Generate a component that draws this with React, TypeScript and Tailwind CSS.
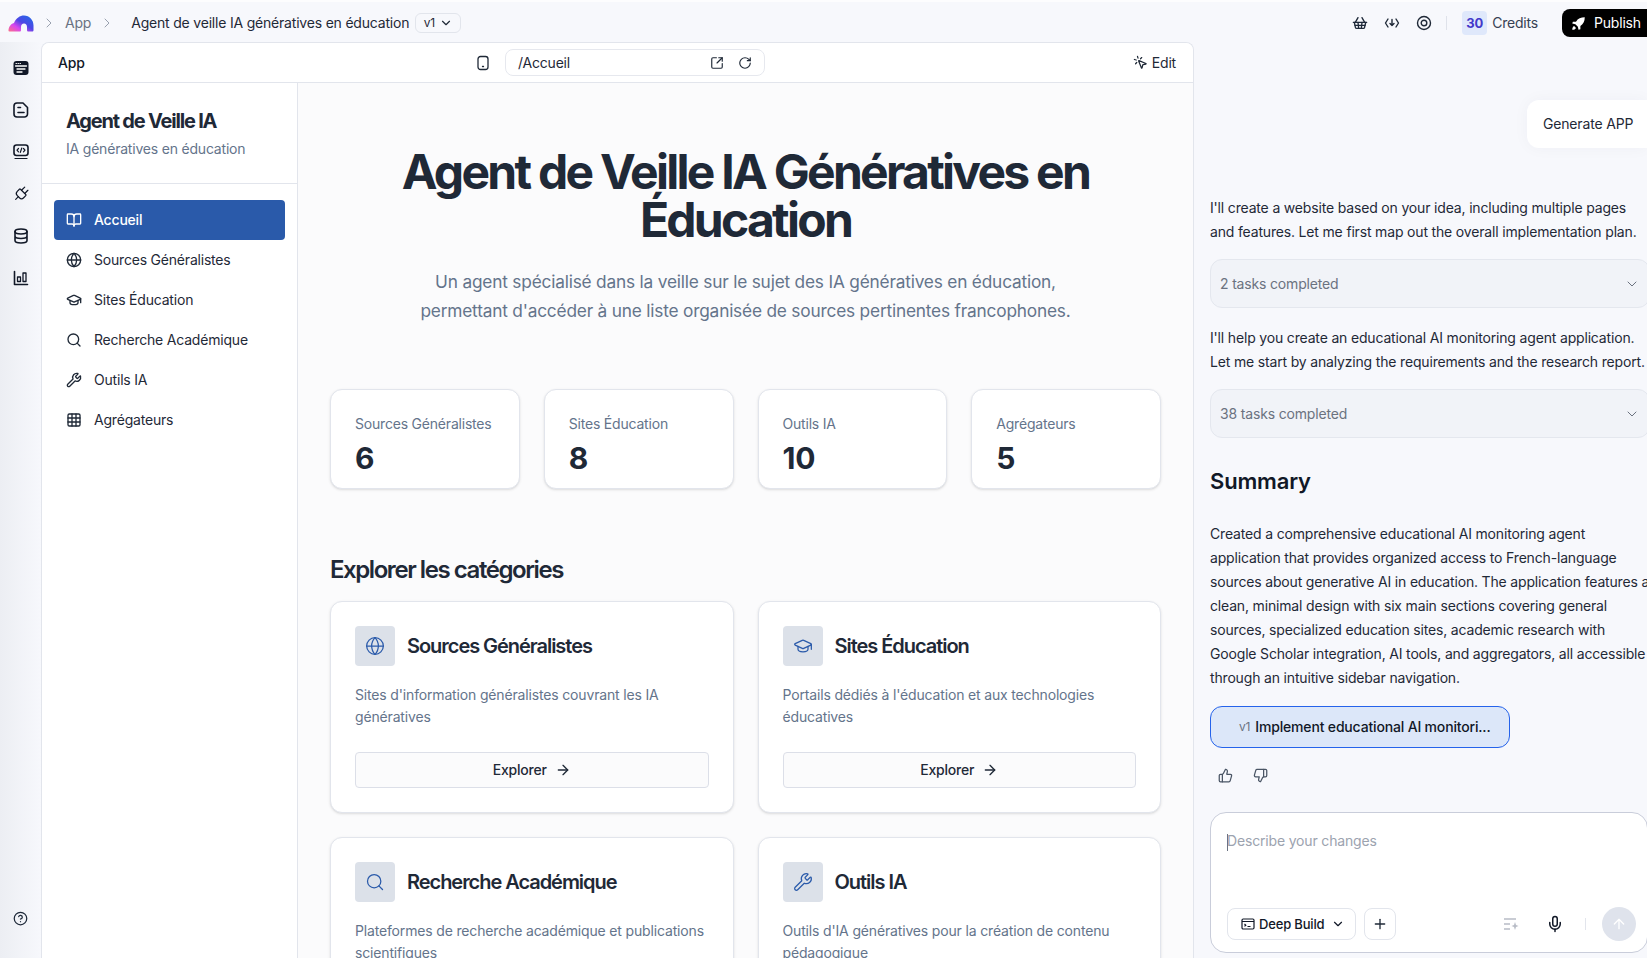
import {
  ArrowRight,
  ArrowUp,
  BookOpen,
  ChevronDown,
  ChevronRight,
  CircleHelp,
  Globe,
  GraduationCap,
  Grid3x3,
  Mic,
  MousePointerClick,
  Plug,
  Plus,
  RotateCw,
  Search,
  ShoppingBasket,
  SquareArrowOutUpRight,
  ThumbsDown,
  ThumbsUp,
  Wrench,
} from 'lucide-react'

const navItems = [
  { label: 'Sources Généralistes', icon: Globe },
  { label: 'Sites Éducation', icon: GraduationCap },
  { label: 'Recherche Académique', icon: Search },
  { label: 'Outils IA', icon: Wrench },
  { label: 'Agrégateurs', icon: Grid3x3 },
]

const stats = [
  { label: 'Sources Généralistes', value: '6' },
  { label: 'Sites Éducation', value: '8' },
  { label: 'Outils IA', value: '10' },
  { label: 'Agrégateurs', value: '5' },
]

const categories = [
  { title: 'Sources Généralistes', text: "Sites d'information généralistes couvrant les IA génératives", icon: Globe },
  { title: 'Sites Éducation', text: "Portails dédiés à l'éducation et aux technologies éducatives", icon: GraduationCap },
  { title: 'Recherche Académique', text: 'Plateformes de recherche académique et publications scientifiques', icon: Search },
  { title: 'Outils IA', text: "Outils d'IA génératives pour la création de contenu pédagogique", icon: Wrench },
]

function Logo() {
  return (
    <svg width="26" height="17" viewBox="0 0 26 17">
      <defs>
        <linearGradient id="lg" x1="0" y1="1" x2="1" y2="0">
          <stop offset="0" stopColor="#fb7185" />
          <stop offset="0.3" stopColor="#d946ef" />
          <stop offset="0.55" stopColor="#4f46e5" />
          <stop offset="1" stopColor="#1d6fe8" />
        </linearGradient>
      </defs>
      <path d="M0.500 16c0-4 2-7 5.500-8C8 3 12 0.500 16 0.500c5.500 0 9.500 4.500 9.500 10V15c0 1-.5 1.500-1.500 1.500h-3.500c-1 0-1.500-.5-1.500-1.500v-3c0-2-1.200-3.500-3-3.500S13 10 13 12v3c0 1-.5 1.500-1.500 1.500H1.500c-.6 0-1-.2-1-.5z" fill="url(#lg)" />
    </svg>
  )
}

function RailIcon({ children }: { children: React.ReactNode }) {
  return (
    <svg width="18" height="18" viewBox="0 0 18 18" fill="none" stroke="#111827" strokeWidth="1.600" strokeLinecap="round" strokeLinejoin="round">
      {children}
    </svg>
  )
}

function Rail() {
  return (
    <aside className="flex w-[41px] shrink-0 flex-col items-center bg-gradient-to-r from-[#eceef3] to-[#f7f8fc] pb-[32px]">
      <div className="flex flex-col items-center gap-[24px] pt-[17px]">
        <RailIcon>
          <rect x="1.500" y="2" width="15" height="14" rx="3" fill="#111827" stroke="none" />
          <path d="M3.500 7h11M5 10h8M5 13h5" stroke="#fff" strokeWidth="1.300" />
          <path d="M4 4.500h.5M6 4.500h.5M8 4.500h.5" stroke="#fff" strokeWidth="1" />
        </RailIcon>
        <RailIcon>
          <path d="M5 2h6l4.500 4.500V13a3 3 0 0 1-3 3h-7.500a3 3 0 0 1-3-3V5a3 3 0 0 1 3-3z" />
          <path d="M6 6.500h2.500M6 11.500h6" />
        </RailIcon>
        <RailIcon>
          <rect x="2" y="2" width="14" height="10.500" rx="2.500" />
          <path d="M6.500 5.500l-1.500 1.700 1.500 1.700M11.500 5.500L13 7.200l-1.500 1.700M9.800 5l-1.500 4.400M3 15.500h12" strokeWidth="1.200" />
        </RailIcon>
        <Plug className="h-[18px] w-[18px] rotate-45 text-[#111827]" strokeWidth={1.6} />
        <RailIcon>
          <ellipse cx="9" cy="4.500" rx="6" ry="2.500" />
          <path d="M3 4.500v9c0 1.400 2.700 2.500 6 2.500s6-1.100 6-2.500v-9M3 9c0 1.400 2.700 2.500 6 2.500s6-1.100 6-2.500" />
        </RailIcon>
        <RailIcon>
          <path d="M2.500 2.500v13h13" />
          <rect x="5.500" y="8" width="3" height="4.500" strokeWidth="1.300" />
          <rect x="11" y="4" width="3" height="8.500" strokeWidth="1.300" />
        </RailIcon>
      </div>
      <CircleHelp className="mt-auto h-[15px] w-[15px] text-gray-800" />
    </aside>
  )
}

function TopBar() {
  return (
    <header className="flex h-[42px] shrink-0 items-center border-t-2 border-white/70 pt-[2px] text-sm">
      <div className="ml-2 flex items-center">
        <Logo />
        <ChevronRight className="ml-[7px] h-4 w-4 text-gray-400" strokeWidth={1.5} />
        <span className="ml-2 text-gray-500">App</span>
        <ChevronRight className="ml-2 h-4 w-4 text-gray-400" strokeWidth={1.5} />
        <span className="ml-4 text-[#1f2937]">Agent de veille IA génératives en éducation</span>
        <span className="ml-[6px] flex h-[20px] w-[46px] items-center justify-center gap-1 rounded-md border border-[#e2e5ec] text-xs text-[#1f2937]">
          v1 <ChevronDown className="h-[14px] w-[14px]" />
        </span>
      </div>
      <div className="ml-auto flex items-center">
        <ShoppingBasket className="h-4 w-4 text-gray-800" />
        <svg className="ml-4" width="16" height="16" viewBox="0 0 16 16" fill="none" stroke="#1f2937" strokeWidth="1.400" strokeLinecap="round" strokeLinejoin="round">
          <path d="M4 4L1.500 8 4 12M12 4l2.500 4L12 12M8 4.500v6M6 8.500l2 2 2-2" />
        </svg>
        <svg className="ml-4" width="16" height="16" viewBox="0 0 16 16" fill="none" stroke="#1f2937" strokeWidth="1.400">
          <circle cx="8" cy="8" r="6.500" />
          <circle cx="8" cy="8" r="2.800" />
        </svg>
        <span className="ml-[14px] h-[14px] w-px bg-[#dfe2ea]" />
        <span className="ml-[15px] flex h-[24px] w-[25px] items-center justify-center rounded bg-[#dfe8fb] text-[13px] font-bold text-[#4338ca]">30</span>
        <span className="ml-[5px] text-gray-700">Credits</span>
        <button className="ml-[24px] flex h-[28px] w-[98px] items-center gap-2 rounded-lg bg-black pl-[9px] text-white">
          <svg width="15" height="15" viewBox="0 0 24 24" fill="#fff">
            <path d="M22 2c-6 0-11 2-14 7H3l-1 3 5 1 4 4 1 5 3-1v-5c5-3 7-8 7-14zM5 16c-2 1-3 3-3 6 3 0 5-1 6-3z" />
          </svg>
          Publish
        </button>
      </div>
    </header>
  )
}

function PreviewHeader() {
  return (
    <div className="flex h-[40px] shrink-0 items-center border-b border-[#e2e5ec] bg-white pl-4 pr-[17px] text-sm">
      <span className="w-[418px] font-medium text-[#111827]">App</span>
      <svg width="14" height="16" viewBox="0 0 14 16" fill="none" stroke="#1f2937" strokeWidth="1.300">
        <rect x="2" y="1.500" width="10" height="13" rx="2.500" />
        <path d="M6.500 11.500h1" strokeLinecap="round" />
      </svg>
      <div className="ml-[15px] flex h-[27px] w-[260px] items-center rounded-lg border border-[#e6e8ee] pl-3 pr-3 text-[#1f2937]">
        <span>/Accueil</span>
        <SquareArrowOutUpRight className="ml-auto h-[14px] w-[14px]" />
        <RotateCw className="ml-[14px] h-[14px] w-[14px]" />
      </div>
      <div className="ml-auto flex items-center gap-1 text-[#1f2937]">
        <MousePointerClick className="h-[15px] w-[15px]" />
        Edit
      </div>
    </div>
  )
}

function Sidebar() {
  return (
    <aside className="w-[256px] shrink-0 border-r border-[#e2e5ec] bg-white">
      <div className="border-b border-[#e2e5ec] px-6 pb-6 pt-6">
        <h2 className="text-xl font-bold leading-7 tracking-[-0.06em] text-[#1f2937]">Agent de Veille IA</h2>
        <p className="mt-1 text-sm text-[#64748b]">IA génératives en éducation</p>
      </div>
      <nav className="px-3 pt-4 text-sm">
        <div className="flex h-[40px] items-center gap-3 rounded-sm bg-[#2a5aaa] px-3 font-medium text-white">
          <BookOpen className="h-4 w-4" />
          Accueil
        </div>
        {navItems.map((item) => (
          <div key={item.label} className="flex h-[40px] items-center gap-3 px-3 text-[#1f2937]">
            <item.icon className="h-4 w-4" />
            {item.label}
          </div>
        ))}
      </nav>
    </aside>
  )
}

function MainContent() {
  return (
    <main className="min-w-0 flex-1 overflow-hidden bg-[#fbfbfc] px-8 pt-[65px]">
      <div className="mb-16 text-center">
        <h1 className="mx-auto mb-[23px] max-w-[760px] text-5xl font-bold leading-[48px] tracking-[-0.057em] text-[#1f2937]">
          Agent de Veille IA Génératives en Éducation
        </h1>
        <p className="mx-auto max-w-[672px] text-[17.300px] leading-[29px] tracking-[-0.2px] text-[#64748b]">
          Un agent spécialisé dans la veille sur le sujet des IA génératives en éducation, permettant d'accéder à une liste organisée de sources pertinentes francophones.
        </p>
      </div>

      <div className="mb-[65px] grid grid-cols-4 gap-6">
        {stats.map((stat) => (
          <div key={stat.label} className="h-[100px] rounded-xl border border-[#e2e5ec] bg-white px-6 pt-6 shadow-sm">
            <div className="whitespace-nowrap text-sm text-[#64748b]">{stat.label}</div>
            <div className="mt-[6px] text-3xl font-bold text-[#1f2937]">{stat.value}</div>
          </div>
        ))}
      </div>

      <h2 className="mb-[15px] text-2xl font-semibold tracking-[-0.06em] text-[#1f2937]">Explorer les catégories</h2>
      <div className="grid grid-cols-2 gap-6">
        {categories.map((cat) => (
          <div key={cat.title} className="rounded-xl border border-[#e2e5ec] bg-white p-6 shadow-sm">
            <div className="flex items-center gap-3">
              <div className="flex h-10 w-10 items-center justify-center rounded bg-[#dce1e9]">
                <cat.icon className="h-5 w-5 text-[#2a5aaa]" strokeWidth={1.5} />
              </div>
              <h3 className="text-xl font-semibold tracking-[-0.052em] text-[#1f2937]">{cat.title}</h3>
            </div>
            <p className="mt-[18px] text-sm leading-[22px] tracking-[-0.16px] text-[#64748b]">{cat.text}</p>
            <button className="mt-6 flex h-[36px] w-full items-center justify-center gap-2 rounded-sm border border-[#dcdfe8] bg-[#fbfbfc] text-sm font-medium text-[#1f2937]">
              Explorer
              <ArrowRight className="h-4 w-4" />
            </button>
          </div>
        ))}
      </div>
    </main>
  )
}

function TaskBox({ text }: { text: string }) {
  return (
    <div className="mt-[15px] flex h-[49px] items-center rounded-xl border border-[#e4e7ee] bg-[#f1f3f8] pl-[9px] pr-[9px] text-sm text-[#6b7280]">
      {text}
      <ChevronDown className="ml-auto h-4 w-4" strokeWidth={1.5} />
    </div>
  )
}

function Chat() {
  return (
    <section className="w-[453px] shrink-0 pl-4 text-sm tracking-[-0.17px] text-[#1f2937]">
      <div className="flex justify-end pt-[58px]">
        <div className="flex h-[48px] w-[120px] items-center rounded-l-xl bg-white pl-4 shadow-[0_0_16px_rgba(30,40,80,0.04)]">Generate APP</div>
      </div>
      <div className="w-[440px]">
        <p className="mt-[48px] leading-6">
          I'll create a website based on your idea, including multiple pages and features. Let me first map out the overall implementation plan.
        </p>
        <TaskBox text="2 tasks completed" />
        <p className="mt-[18px] whitespace-nowrap leading-6">
          I'll help you create an educational AI monitoring agent application.
          <br />
          Let me start by analyzing the requirements and the research report.
        </p>
        <TaskBox text="38 tasks completed" />
        <h2 className="mt-[27px] text-[22px] font-semibold leading-8 text-[#111827]">Summary</h2>
        <p className="mt-[25px] leading-6">
          Created a comprehensive educational AI monitoring agent application that provides organized access to French-language sources about generative AI in education. The application features a clean, minimal design with six main sections covering general sources, specialized education sites, academic research with Google Scholar integration, AI tools, and aggregators, all accessible through an intuitive sidebar navigation.
        </p>
        <div className="mt-[16px] flex h-[42px] w-[300px] items-center rounded-xl border border-[#2563eb] bg-[#dce7f9] pl-[28px]">
          <span className="mr-[5px] text-xs text-gray-500">v1</span>
          <span className="font-medium text-[#111827]">Implement educational AI monitori...</span>
        </div>
        <div className="mt-[20px] flex gap-[20px] pl-[8px] text-gray-600">
          <ThumbsUp className="h-[15px] w-[15px]" />
          <ThumbsDown className="h-[15px] w-[15px]" />
        </div>
        <div className="mt-[29px] h-[141px] w-[438px] rounded-2xl border border-[#c9cdda] bg-white pl-4 pr-[11px] pt-[18px]">
          <div className="h-[50px] text-[#9ca3af]">
            <span className="mr-[-1px] inline-block h-[17px] w-px bg-gray-500 align-middle" />
            Describe your changes
          </div>
          <div className="mt-[26px] flex items-center">
            <div className="flex h-[32px] w-[129px] items-center gap-[4px] rounded-lg border border-[#e2e5ec] pl-[13px] text-[13px] font-medium text-[#111827]">
              <svg width="14" height="14" viewBox="0 0 14 14" fill="none" stroke="#111827" strokeWidth="1.200">
                <rect x="1" y="2" width="12" height="10" rx="1.200" />
                <path d="M1 4.500h12M3.500 7l1.300 1.200-1.300 1.200M6.500 9.500h3" />
              </svg>
              Deep Build
              <ChevronDown className="ml-[3px] h-[14px] w-[14px]" />
            </div>
            <div className="ml-[8px] flex h-[32px] w-[32px] items-center justify-center rounded-lg border border-[#e2e5ec]">
              <Plus className="h-4 w-4" />
            </div>
            <svg className="ml-auto" width="16" height="16" viewBox="0 0 16 16" fill="none" stroke="#b8bcc6" strokeWidth="1.300">
              <path d="M1 3h12M1 8h6M1 13h6" />
              <path d="M12 6l1 3 2.500 1-2.500 1-1 3-1-3-2.500-1 2.500-1z" fill="#b8bcc6" stroke="none" />
            </svg>
            <Mic className="ml-[27px] h-[18px] w-[18px] text-[#111827]" />
            <span className="ml-[21px] h-[12px] w-px bg-[#e2e5ec]" />
            <div className="ml-[16px] flex h-[34px] w-[34px] items-center justify-center rounded-full bg-[#dfe3ec] text-white">
              <ArrowUp className="h-4 w-4" />
            </div>
          </div>
        </div>
      </div>
    </section>
  )
}

export default function App() {
  return (
    <div className="h-[958px] w-[1647px] overflow-hidden bg-[#f7f8fc] font-['Inter',sans-serif] tracking-[-0.2px]">
      <div className="flex h-full w-[1660px] flex-col">
        <TopBar />
        <div className="flex min-h-0 flex-1">
          <Rail />
          <div className="flex w-[1153px] shrink-0 flex-col overflow-hidden rounded-t-lg border-x border-t border-[#e2e5ec]">
            <PreviewHeader />
            <div className="flex min-h-0 flex-1">
              <Sidebar />
              <MainContent />
            </div>
          </div>
          <Chat />
        </div>
      </div>
    </div>
  )
}
